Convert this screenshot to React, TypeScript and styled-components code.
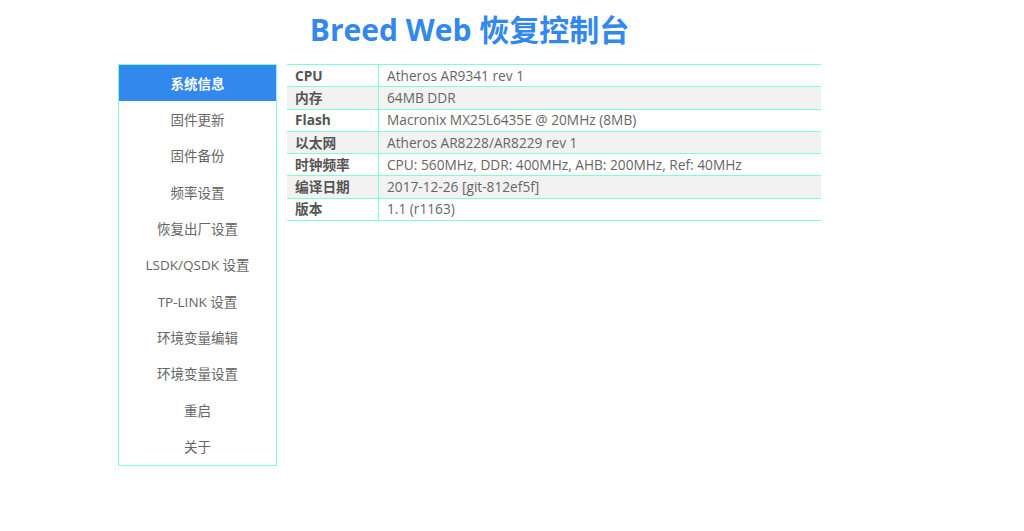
import React from "react";
import styled, { createGlobalStyle } from "styled-components";

const Global = createGlobalStyle`
  html, body { margin: 0; padding: 0; background: #fff; }
  body { font-family: "Open Sans", "Noto Sans CJK SC", sans-serif; }
`;

const Page = styled.div`
  width: 703px;
  margin-left: 118px;
`;

const Title = styled.h1`
  margin: 0 0 6px;
  height: 58px;
  line-height: 59px;
  text-align: center;
  font-size: 30px;
  font-weight: 700;
  color: #3388ee;
  font-family: "Open Sans", "Noto Sans CJK SC", sans-serif;
`;

const Body = styled.div`
  display: flex;
  align-items: flex-start;
  gap: 10px;
`;

const Sidebar = styled.ul`
  list-style: none;
  margin: 0;
  padding: 0;
  width: 157px;
  border: 1px solid #7fffd4;
`;

const NavItem = styled.li<{ $active?: boolean }>`
  height: 36.35px;
  display: flex;
  align-items: center;
  justify-content: center;
  padding-bottom: 1px;
  box-sizing: border-box;
  font-size: 13.5px;
  color: ${(p) => (p.$active ? "#fff" : "#666")};
  background: ${(p) => (p.$active ? "#3388ee" : "transparent")};
  font-weight: ${(p) => (p.$active ? 700 : 400)};
`;

const Table = styled.table`
  flex: 1;
  border-collapse: collapse;
  border-top: 1px solid #7fffd4;
  font-size: 13.7px;
`;

const Row = styled.tr<{ $alt?: boolean }>`
  background: ${(p) => (p.$alt ? "#f2f2f2" : "#fff")};
  border-bottom: 1px solid #7fffd4;
`;

const Label = styled.td`
  width: 83px;
  height: 21.3px;
  padding: 0 0 0 8px;
  line-height: 20px;
  font-weight: 700;
  color: #555;
  border-right: 1px solid #7fffd4;
  white-space: nowrap;
`;

const Value = styled.td`
  padding: 0 0 0 8px;
  line-height: 20px;
  color: #666;
  white-space: nowrap;
`;

const nav = [
  "系统信息",
  "固件更新",
  "固件备份",
  "频率设置",
  "恢复出厂设置",
  "LSDK/QSDK 设置",
  "TP-LINK 设置",
  "环境变量编辑",
  "环境变量设置",
  "重启",
  "关于",
];

const info: [string, string][] = [
  ["CPU", "Atheros AR9341 rev 1"],
  ["内存", "64MB DDR"],
  ["Flash", "Macronix MX25L6435E @ 20MHz (8MB)"],
  ["以太网", "Atheros AR8228/AR8229 rev 1"],
  ["时钟频率", "CPU: 560MHz, DDR: 400MHz, AHB: 200MHz, Ref: 40MHz"],
  ["编译日期", "2017-12-26 [git-812ef5f]"],
  ["版本", "1.1 (r1163)"],
];

export default function App() {
  return (
    <>
      <Global />
      <Page>
        <Title>Breed Web 恢复控制台</Title>
        <Body>
          <Sidebar>
            {nav.map((n, i) => (
              <NavItem key={n} $active={i === 0}>
                {n}
              </NavItem>
            ))}
          </Sidebar>
          <Table>
            <tbody>
              {info.map(([k, v], i) => (
                <Row key={k} $alt={i % 2 === 1}>
                  <Label>{k}</Label>
                  <Value>{v}</Value>
                </Row>
              ))}
            </tbody>
          </Table>
        </Body>
      </Page>
    </>
  );
}
